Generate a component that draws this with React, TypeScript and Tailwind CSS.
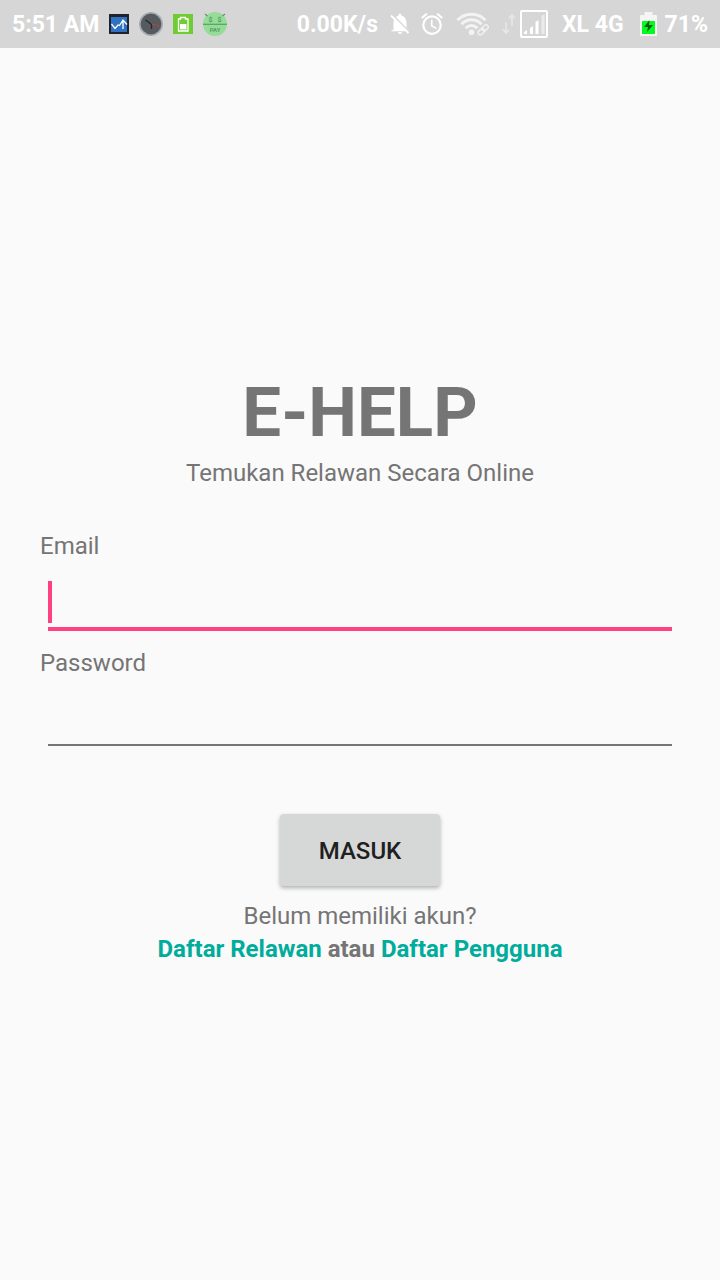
import React from "react";

function ChartIcon() {
  return (
    <svg width="20" height="20" viewBox="0 0 20 20" aria-hidden="true">
      <rect width="20" height="20" fill="#20222f" />
      <rect x="2" y="3" width="16" height="15" fill="#2f72c4" />
      <path d="M2.500 10l3.500 4.500 3-3.500 1.500.5L14 6l4 4.500M14 6v9" fill="none" stroke="#fff" strokeWidth="1.300" />
    </svg>
  );
}

function ClockIcon() {
  return (
    <svg width="24" height="24" viewBox="0 0 24 24" aria-hidden="true">
      <circle cx="12" cy="12" r="11.200" fill="#555b5e" stroke="#a9adb3" strokeWidth="1.600" />
      <path d="M12 12L6.500 8M12.500 12v5" stroke="#25282c" strokeWidth="1.300" />
      <path d="M13 12.200l7 1.800" stroke="#e0392b" strokeWidth="1" strokeDasharray="4 1" />
    </svg>
  );
}

function BatteryAppIcon() {
  return (
    <svg width="20" height="20" viewBox="0 0 20 20" aria-hidden="true">
      <rect width="20" height="20" fill="#70cb35" />
      <path d="M7.500 5V3.500h5V5H15v12H5.500V5z" fill="none" stroke="#fff" strokeWidth="1.300" />
      <rect x="7" y="10" width="6.500" height="5.500" fill="#fff" />
    </svg>
  );
}

function PayIcon() {
  return (
    <svg width="24" height="24" viewBox="0 0 24 24" aria-hidden="true">
      <circle cx="12" cy="12" r="12" fill="#94dc98" />
      <path d="M2 2l2.500 2M22 2l-2.500 2" stroke="#5f8f68" strokeWidth="1.200" />
      <path d="M0 12.300h24" stroke="#5b9e67" strokeWidth="1.200" />
      <g fill="#5b9e67" fontFamily="Roboto, sans-serif" textAnchor="middle">
        <text x="7.500" y="9.500" fontSize="7">$</text>
        <text x="16.500" y="9.500" fontSize="7">$</text>
        <text x="12" y="20" fontSize="6">PAY</text>
      </g>
    </svg>
  );
}

function BellOffIcon() {
  return (
    <svg width="20" height="22" viewBox="0 0 20 22" aria-hidden="true">
      <path d="M3.500 17V10C3.500 6 5.500 3.500 8.500 2.800V2a1.500 1.500 0 013 0v.8C14.500 3.500 16.500 6 16.500 10v5l2 2v1.200h-17V17z" fill="#fff" />
      <path d="M8 19h4a2 2 0 01-4 0z" fill="#fff" />
      <path d="M2 1.500l17 17.500" stroke="#d6d6d6" strokeWidth="2" />
      <path d="M1 2.500l17.500 17.500" stroke="#fff" strokeWidth="1.800" />
    </svg>
  );
}

function AlarmIcon() {
  return (
    <svg width="24" height="24" viewBox="1 1 22 22" fill="#fff" aria-hidden="true">
      <path d="M22 5.720l-4.600-3.860-1.290 1.530 4.600 3.860L22 5.720zM7.880 3.390L6.600 1.860 2 5.710l1.290 1.530 4.590-3.850zM12.500 8H11v6l4.750 2.850.75-1.230-4-2.370V8zM12 4a9 9 0 100 18 9 9 0 000-18zm0 16a7 7 0 110-14 7 7 0 010 14z" />
    </svg>
  );
}

function WifiIcon() {
  return (
    <svg width="34" height="24" viewBox="0 0 34 24" fill="none" aria-hidden="true">
      <g stroke="#f3f3f3" strokeWidth="3">
        <path d="M1.500 8.200C9 .2 22 .2 29.500 8.200" />
        <path d="M5.500 12.200c5.500-6 14.500-6 20 0" />
        <path d="M9.700 16.200c3.400-3.700 8.200-3.700 11.600 0" />
      </g>
      <circle cx="15.500" cy="20.300" r="2.800" fill="#f3f3f3" />
      <g transform="rotate(-45 27 18)" stroke="#d6d6d6" strokeWidth="4">
        <rect x="21" y="15.800" width="7" height="4.400" rx="2.200" />
        <rect x="26.500" y="15.800" width="7" height="4.400" rx="2.200" />
      </g>
      <g transform="rotate(-45 27 18)" stroke="#f3f3f3" strokeWidth="1.400">
        <rect x="21" y="15.800" width="7" height="4.400" rx="2.200" />
        <rect x="26.500" y="15.800" width="7" height="4.400" rx="2.200" />
      </g>
    </svg>
  );
}

function DataArrowsIcon() {
  return (
    <svg width="14" height="22" viewBox="0 0 14 22" fill="none" stroke="#e8e8e8" strokeWidth="1.600" aria-hidden="true">
      <path d="M4 9v11M1 16.500L4 20l3-3.500M10 13V2M7 5.500L10 2l3 3.500" />
    </svg>
  );
}

function SignalIcon() {
  return (
    <svg width="28" height="28" viewBox="0 0 28 28" aria-hidden="true">
      <rect x="1" y="1" width="26" height="26" rx="1" fill="none" stroke="#fff" strokeWidth="2" />
      <path d="M4 24v-2l3-2v4zM10 24v-6l3-2v8zM15.500 24V12l3-2v14z" fill="#fff" />
      <path d="M21.500 24V6l3-2v20z" fill="#ebebeb" />
    </svg>
  );
}

function ChargingIcon() {
  return (
    <svg width="17" height="24" viewBox="0 0 17 24" aria-hidden="true">
      <path d="M4.500 3V0h8v3H16a1 1 0 011 1v19a1 1 0 01-1 1H1a1 1 0 01-1-1V4a1 1 0 011-1z" fill="#f5f5f5" />
      <rect x="2" y="9" width="13" height="13" fill="#00fb1c" />
      <path d="M9.500 8L4 15h4l-1 5 6-7H9z" fill="#0b5a14" />
    </svg>
  );
}

function StatusBar() {
  return (
    <header className="flex h-12 items-center justify-between bg-[#d6d6d6] px-3 text-[23px] font-bold whitespace-nowrap text-white">
      <div className="flex items-center gap-2.5">
        <span className="pt-0.5">5:51 AM</span>
        <div className="flex items-center gap-2.5">
          <ChartIcon />
          <ClockIcon />
          <BatteryAppIcon />
          <PayIcon />
        </div>
      </div>
      <div className="flex items-center gap-3">
        <span className="pt-0.5">0.00K/s</span>
        <div className="flex items-center gap-2.5">
          <BellOffIcon />
          <AlarmIcon />
        </div>
        <WifiIcon />
        <div className="flex items-center gap-1">
          <DataArrowsIcon />
          <SignalIcon />
        </div>
        <span className="mr-1 ml-0.5 pt-0.5">XL 4G</span>
        <div className="flex items-center gap-2">
          <ChargingIcon />
          <span className="pt-0.5">71%</span>
        </div>
      </div>
    </header>
  );
}

export default function App() {
  return (
    <div className="flex min-h-screen flex-col bg-[#fafafa] font-['Roboto',sans-serif] text-2xl text-[#757575]">
      <StatusBar />
      <main className="flex flex-1 flex-col justify-center px-10 pt-[7px]">
        <h1 className="text-center text-[69px] leading-[88px] font-bold">E-HELP</h1>
        <p className="text-center leading-8">Temukan Relawan Secara Online</p>
        <form className="mt-[41px] flex flex-col" onSubmit={(e) => e.preventDefault()}>
          <label htmlFor="email" className="leading-8">Email</label>
          <div className="relative mx-2">
            <input
              id="email"
              type="email"
              className="block h-[69px] w-full border-b-4 border-[#ff4081] bg-transparent px-1 pt-4 caret-[#ff4081] outline-none"
            />
            <span className="pointer-events-none absolute bottom-2 left-0 h-[42px] w-1 bg-[#ff4081]" />
          </div>
          <label htmlFor="password" className="mt-4 leading-8">Password</label>
          <input
            id="password"
            type="password"
            className="mx-2 block h-[67px] border-b-2 border-[#757575] bg-transparent px-1 pt-4 outline-none"
          />
          <button
            type="submit"
            className="mt-[68px] h-[72px] w-40 self-center rounded-sm bg-[#d6d8d7] pt-0.5 font-medium text-[#1f2020] shadow-[0_2px_4px_rgba(0,0,0,0.3)]"
          >
            MASUK
          </button>
        </form>
        <p className="mt-3.5 text-center leading-8">Belum memiliki akun?</p>
        <p className="text-center leading-[34px] font-bold">
          <a href="#relawan" className="text-[#00ac9c]">Daftar Relawan</a> atau{" "}
          <a href="#pengguna" className="text-[#00ac9c]">Daftar Pengguna</a>
        </p>
      </main>
    </div>
  );
}
